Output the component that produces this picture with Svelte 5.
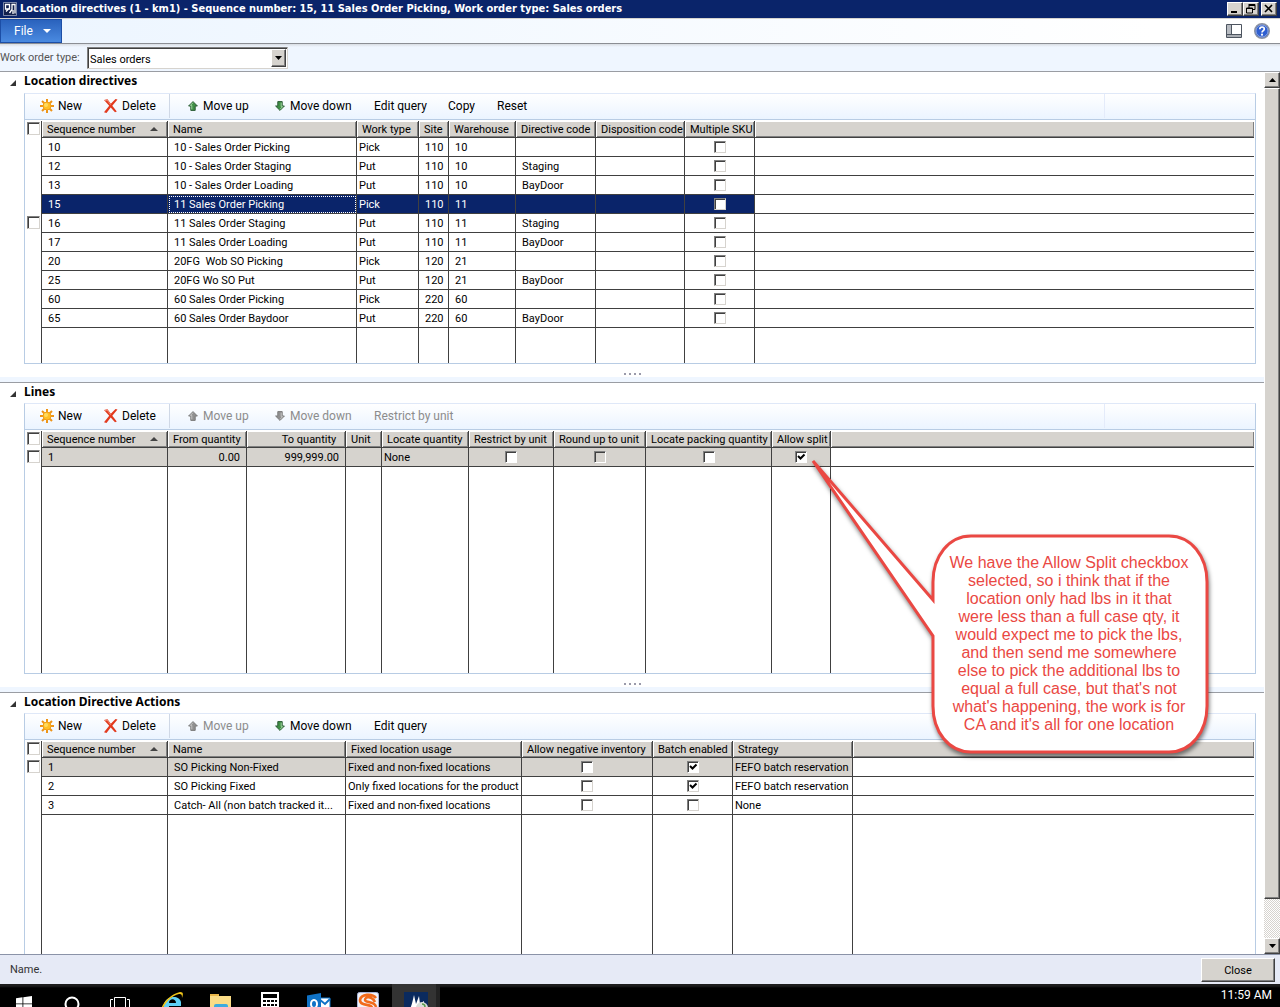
<script lang="ts">
    type Column = {
        title: string
        width: number
        align?: 'right' | 'center'
        indent?: boolean
        sorted?: boolean
    }

    type Action = {
        label: string
        width: number
        icon?: 'new' | 'delete' | 'up' | 'down'
        disabled?: boolean
        divider?: boolean
    }

    type Row = {
        cells: (string | boolean)[]
        state?: 'selected' | 'current'
        marker?: boolean
    }

    type Section = {
        title: string
        extraDivider?: boolean
        actions: Action[]
        columns: Column[]
        rows: Row[]
    }

    const sections: Section[] = [
        {
            title: 'Location directives',
            extraDivider: true,
            actions: [
                { label: 'New', width: 64, icon: 'new' },
                { label: 'Delete', width: 65, icon: 'delete' },
                { label: 'Move up', width: 87, icon: 'up', divider: true },
                { label: 'Move down', width: 99, icon: 'down' },
                { label: 'Edit query', width: 74 },
                { label: 'Copy', width: 49 },
                { label: 'Reset', width: 49 },
            ],
            columns: [
                { title: 'Sequence number', width: 126, sorted: true, indent: true },
                { title: 'Name', width: 189, indent: true },
                { title: 'Work type', width: 62 },
                { title: 'Site', width: 30, indent: true },
                { title: 'Warehouse', width: 67, indent: true },
                { title: 'Directive code', width: 80, indent: true },
                { title: 'Disposition code', width: 89, indent: true },
                { title: 'Multiple SKU', width: 70, align: 'center' },
            ],
            rows: [
                { cells: ['10', '10 - Sales Order Picking', 'Pick', '110', '10', '', '', false] },
                { cells: ['12', '10 - Sales Order Staging', 'Put', '110', '10', 'Staging', '', false] },
                { cells: ['13', '10 - Sales Order Loading', 'Put', '110', '10', 'BayDoor', '', false] },
                { cells: ['15', '11 Sales Order Picking', 'Pick', '110', '11', '', '', false], state: 'selected' },
                { cells: ['16', '11 Sales Order Staging', 'Put', '110', '11', 'Staging', '', false], marker: true },
                { cells: ['17', '11 Sales Order Loading', 'Put', '110', '11', 'BayDoor', '', false] },
                { cells: ['20', '20FG  Wob SO Picking', 'Pick', '120', '21', '', '', false] },
                { cells: ['25', '20FG Wo SO Put', 'Put', '120', '21', 'BayDoor', '', false] },
                { cells: ['60', '60 Sales Order Picking', 'Pick', '220', '60', '', '', false] },
                { cells: ['65', '60 Sales Order Baydoor', 'Put', '220', '60', 'BayDoor', '', false] },
            ],
        },
        {
            title: 'Lines',
            extraDivider: true,
            actions: [
                { label: 'New', width: 64, icon: 'new' },
                { label: 'Delete', width: 65, icon: 'delete' },
                { label: 'Move up', width: 87, icon: 'up', divider: true, disabled: true },
                { label: 'Move down', width: 99, icon: 'down', disabled: true },
                { label: 'Restrict by unit', width: 99, disabled: true },
            ],
            columns: [
                { title: 'Sequence number', width: 126, sorted: true, indent: true },
                { title: 'From quantity', width: 79, align: 'right' },
                { title: 'To quantity', width: 99, align: 'right' },
                { title: 'Unit', width: 36 },
                { title: 'Locate quantity', width: 87 },
                { title: 'Restrict by unit', width: 85, align: 'center' },
                { title: 'Round up to unit', width: 92, align: 'center' },
                { title: 'Locate packing quantity', width: 126, align: 'center' },
                { title: 'Allow split', width: 59, align: 'center' },
            ],
            rows: [
                { cells: ['1', '0.00', '999,999.00', '', 'None', false, false, false, true], state: 'current', marker: true },
            ],
        },
        {
            title: 'Location Directive Actions',
            actions: [
                { label: 'New', width: 64, icon: 'new' },
                { label: 'Delete', width: 65, icon: 'delete' },
                { label: 'Move up', width: 87, icon: 'up', divider: true, disabled: true },
                { label: 'Move down', width: 99, icon: 'down' },
                { label: 'Edit query', width: 74 },
            ],
            columns: [
                { title: 'Sequence number', width: 126, sorted: true, indent: true },
                { title: 'Name', width: 178, indent: true },
                { title: 'Fixed location usage', width: 176 },
                { title: 'Allow negative inventory', width: 131, align: 'center' },
                { title: 'Batch enabled', width: 80, align: 'center' },
                { title: 'Strategy', width: 120 },
            ],
            rows: [
                { cells: ['1', 'SO Picking Non-Fixed', 'Fixed and non-fixed locations', false, true, 'FEFO batch reservation'], state: 'current', marker: true },
                { cells: ['2', 'SO Picking Fixed', 'Only fixed locations for the product', false, true, 'FEFO batch reservation'] },
                { cells: ['3', 'Catch- All (non batch tracked it...', 'Fixed and non-fixed locations', false, false, 'None'] },
            ],
        },
    ]
</script>

{#snippet icon(name: string)}
    {#if name === 'new'}
        <svg class="icon" width="14" height="14" viewBox="0 0 14 14" aria-hidden="true">
            <g stroke="#ee9417" stroke-width="2">
                <path d="M7 0v14M0 7h14M2 2l10 10M12 2L2 12" />
            </g>
            <circle cx="7" cy="7" r="4" fill="#ffbf26" stroke="#f0a01c" />
            <circle cx="6" cy="6" r="2" fill="#ffdb60" />
        </svg>
    {:else if name === 'delete'}
        <svg class="icon" width="14" height="14" viewBox="0 0 14 14" aria-hidden="true">
            <path d="M0 1l3.500-.8 3.300 4.600L11.500 0l2 .6L8.300 6.800l4.500 5.700-1.800.8L6.700 8.500 2.500 14 0 13.200l5.200-6.400z" fill="#e23a1e" />
            <path d="M1 1.500l2.200-.4 3.400 4.700" fill="none" stroke="#f28a72" />
        </svg>
    {:else}
        <svg class="icon arrow" class:flip={name === 'down'} width="10" height="10" viewBox="0 0 10 10" aria-hidden="true">
            <path class="shape" d="M5 .6L9.4 5H7.2v4.4H2.8V5H.6z" />
            <path class="shine" d="M5 1.6L2.4 4.4h1.4v4" />
        </svg>
    {/if}
{/snippet}

<div class="window">
    <header class="titlebar">
        <svg width="14" height="14" viewBox="0 0 14 14" aria-hidden="true">
            <path d="M.5.500h13v13H.5z" fill="#12204c" stroke="#c8cede" stroke-width=".6" />
            <path d="M2 2.500h5M2.500 2v5h4V2M6.500 6L3 9.500M8.500 2.500h3.500v9M9 2v5.500L6.500 11M10 8v4" fill="none" stroke="#fff" stroke-width="1.300" />
        </svg>
        <h1>Location directives (1 - km1) - Sequence number: 15, 11 Sales Order Picking, Work order type: Sales orders</h1>
        <div class="winbuttons">
            <button class="raised" aria-label="Minimize">
                <svg width="12" height="10" viewBox="0 0 12 10"><path d="M2 7h6v2H2z" /></svg>
            </button>
            <button class="raised" aria-label="Restore">
                <svg width="12" height="10" viewBox="0 0 12 10"><path d="M4 .5h6v5H8M4 1.500h6M4 0v4M1.500 4h6v5h-6zM1 4.500h7" fill="none" stroke="#000" /></svg>
            </button>
            <button class="raised close" aria-label="Close window">
                <svg width="12" height="10" viewBox="0 0 12 10"><path d="M2 1l7 7M9 1L2 8" stroke="#000" stroke-width="1.600" /></svg>
            </button>
        </div>
    </header>

    <nav class="ribbon">
        <button class="file">File
            <svg width="8" height="4" viewBox="0 0 8 4" aria-hidden="true"><path d="M0 0h8L4 4z" fill="#fff" /></svg>
        </button>
        <div class="ribbonicons">
            <button class="plain" aria-label="View layout">
                <svg width="16" height="14" viewBox="0 0 16 14">
                    <path d="M.5.500h15v13H.5z" fill="#fff" stroke="#4d5560" />
                    <path d="M1 1h4v9H1z" fill="#b8bcc2" />
                    <path d="M1 11h14v2H1z" fill="#a9adb3" />
                    <path d="M5.500 1v9.500M1 10.500h14" stroke="#4d5560" fill="none" />
                </svg>
            </button>
            <button class="plain" aria-label="Help">
                <svg width="16" height="16" viewBox="0 0 16 16">
                    <circle cx="8" cy="8" r="7.300" fill="#2f5fd0" stroke="#8d93a0" stroke-width="1.400" />
                    <circle cx="8" cy="8" r="6" fill="none" stroke="#c7d2ea" stroke-width=".6" />
                    <path d="M5.800 6.300c0-3 4.500-3 4.500-.3C10.300 7.600 8 7.600 8 9.600" fill="none" stroke="#fff" stroke-width="1.700" />
                    <circle cx="8" cy="11.700" r="1.100" fill="#fff" />
                </svg>
            </button>
        </div>
    </nav>

    <div class="filter">
        <label for="ordertype">Work order type:</label>
        <div class="combo">
            <select id="ordertype">
                <option>Sales orders</option>
            </select>
            <span class="raised dropmark">
                <svg width="7" height="4" viewBox="0 0 7 4" aria-hidden="true"><path d="M0 0h7L3.500 4z" /></svg>
            </span>
        </div>
    </div>

    <div class="content">
        <main>
            {#each sections as section, s}
                <section>
                    <h2>
                        <svg width="6" height="6" viewBox="0 0 6 6" aria-hidden="true"><path d="M6 0v6H0z" fill="#333" /></svg>
                        {section.title}
                    </h2>
                    <div class="panel">
                        <div class="toolbar" class:divided={section.extraDivider}>
                            {#each section.actions as action}
                                {#if action.divider}<span class="divider"></span>{/if}
                                <button disabled={action.disabled} style:width="{action.width}px">
                                    {#if action.icon}{@render icon(action.icon)}{/if}
                                    {action.label}
                                </button>
                            {/each}
                        </div>
                        <div class="gridbox">
                            <table>
                                <colgroup>
                                    <col class="marker" />
                                    {#each section.columns as column}
                                        <col style:width="{column.width}px" />
                                    {/each}
                                    <col />
                                </colgroup>
                                <thead>
                                    <tr>
                                        <td class="marker"><input type="checkbox" aria-label="Select all" /></td>
                                        {#each section.columns as column}
                                            <th class={column.align}>
                                                {column.title}
                                                {#if column.sorted}
                                                    <svg class="sort" width="8" height="4" viewBox="0 0 8 4" aria-hidden="true"><path d="M4 0l4 4H0z" fill="#444" /></svg>
                                                {/if}
                                            </th>
                                        {/each}
                                        <th class="rest"></th>
                                    </tr>
                                </thead>
                                <tbody>
                                    {#each section.rows as row}
                                        <tr class={row.state}>
                                            <td class="marker">
                                                {#if row.marker}<input type="checkbox" aria-label="Select row {row.cells[0]}" />{/if}
                                            </td>
                                            {#each row.cells as cell, c}
                                                {@const column = section.columns[c]}
                                                <td class={column.align} class:indent={column.indent} class:focus={row.state === 'selected' && c === 1}>
                                                    {#if typeof cell === 'boolean'}
                                                        <input type="checkbox" checked={cell} class:grayed={column.title === 'Round up to unit'} aria-label={column.title} />
                                                    {:else}
                                                        {cell}
                                                    {/if}
                                                </td>
                                            {/each}
                                            <td class="rest"></td>
                                        </tr>
                                    {/each}
                                    <tr class="filler">
                                        <td class="marker"></td>
                                        {#each section.columns as _}
                                            <td></td>
                                        {/each}
                                        <td class="rest"></td>
                                    </tr>
                                </tbody>
                            </table>
                        </div>
                    </div>
                    {#if s < sections.length - 1}
                        <div class="splitter"><i></i><i></i><i></i><i></i></div>
                    {/if}
                </section>
            {/each}
        </main>

        <div class="scrollbar">
            <button class="raised" aria-label="Scroll up">
                <svg width="7" height="4" viewBox="0 0 7 4"><path d="M3.500 0L7 4H0z" /></svg>
            </button>
            <div class="raised thumb"></div>
            <div class="track"></div>
            <button class="raised" aria-label="Scroll down">
                <svg width="7" height="4" viewBox="0 0 7 4"><path d="M0 0h7L3.500 4z" /></svg>
            </button>
        </div>

        <aside class="callout">
            <svg width="410" height="314" viewBox="0 0 410 314" aria-hidden="true">
                <path d="M8 11L128 150V132C128 106 144 86 166 86H364C386 86 402 106 402 132V256C402 282 386 302 364 302H166C144 302 128 282 128 256V186z" />
            </svg>
            <p>
                We have the Allow Split checkbox<br />
                selected, so i think that if the<br />
                location only had lbs in it that<br />
                were less than a full case qty, it<br />
                would expect me to pick the lbs,<br />
                and then send me somewhere<br />
                else to pick the additional lbs to<br />
                equal a full case, but that's not<br />
                what's happening, the work is for<br />
                CA and it's all for one location
            </p>
        </aside>
    </div>

    <footer class="status">
        <span>Name.</span>
        <button class="raised">Close</button>
    </footer>
</div>

<div class="taskbar">
    <button class="system" aria-label="Start">
        <svg width="16" height="16" viewBox="0 0 16 16"><path d="M0 2.200L6.500 1.300V7.500H0zM7.300 1.200L16 0v7.500H7.300zM0 8.300h6.500v6.300L0 13.700zM7.300 8.300H16V16l-8.700-1.200z" fill="#fff" /></svg>
    </button>
    <button class="system" aria-label="Search">
        <svg width="16" height="16" viewBox="0 0 16 16"><circle cx="8" cy="8" r="6.500" fill="none" stroke="#fff" stroke-width="2" /></svg>
    </button>
    <button class="system" aria-label="Task view">
        <svg width="20" height="16" viewBox="0 0 20 16"><path d="M4.500 1.500h11v13h-11zM3 3.500H.5v10H3M17 3.500h2.500v10H17" fill="none" stroke="#fff" /></svg>
    </button>
    <div class="pinned">
        <button aria-label="Internet Explorer">
            <svg width="24" height="24" viewBox="0 0 24 24">
                <path d="M20 14H9c0 5 7 6 10 2v4C10 25 3 20 4 12 6 4 19 2 21 10v4zM9 11h7c0-5-7-5-7 0z" fill="#5fd0f5" />
                <path d="M1 22C-1 15 8 3 20 0c4 0 3 3 2 6 0-3 0-4-3-4C11 4 4 12 3 17z" fill="#f0c419" />
            </svg>
        </button>
        <button aria-label="File Explorer">
            <svg width="22" height="20" viewBox="0 0 22 20">
                <path d="M0 0h9v2h12v18H0z" fill="#fbdc86" />
                <path d="M0 0h9v2H0z" fill="#e9b649" />
                <path d="M4 12q0-2 2-2h10q2 0 2 2v8H4z" fill="#3cabdf" />
            </svg>
        </button>
        <button aria-label="Calculator">
            <svg width="18" height="24" viewBox="0 0 18 24">
                <path d="M0 0h18v24H0z" fill="#fff" />
                <path d="M2 2h14v4H2zM2 8h3v2H2zm4 0h3v2H6zm4 0h3v2h-3zm4 0h2v2h-2zM2 12h3v2H2zm4 0h3v2H6zm4 0h3v2h-3zm4 0h2v2h-2z" fill="#000" />
            </svg>
        </button>
        <button aria-label="Outlook">
            <svg width="24" height="24" viewBox="0 0 24 24">
                <path d="M12 6h11v14H12z" fill="#fff" stroke="#0f72c6" />
                <path d="M12 7l6 5 5-5" fill="none" stroke="#0f72c6" stroke-width="2" />
                <path d="M0 3.500L14 1v22L0 20.500z" fill="#0f72c6" />
                <ellipse cx="7" cy="12" rx="3" ry="4" fill="none" stroke="#fff" stroke-width="2" />
            </svg>
        </button>
        <button aria-label="Snagit">
            <svg width="22" height="24" viewBox="0 0 22 24">
                <rect x=".5" y=".5" width="21" height="23" rx="2" fill="#f3f3f8" stroke="#a8b5dc" />
                <path d="M19 6C15 1 4 2 3 8c0 7 12 3 12 8 0 3-6 4-11 1M18 10C15 4 8 4 8 8c0 3 10 1 11 7" fill="none" stroke="#f26a1b" stroke-width="2.600" />
            </svg>
        </button>
        <button class="active" aria-label="Dynamics AX">
            <svg width="24" height="24" viewBox="0 0 24 24">
                <path d="M0 0h24v24H0z" fill="#0a2a5e" />
                <path d="M4 20c3-4 4-8 6-17l2 9 3-8 1 8 4-3v11z" fill="#fff" />
                <circle cx="18" cy="16" r="6" fill="#d8dcd8" />
                <path d="M18 12q3 0 3 3" fill="none" stroke="#5a9a4a" stroke-width="1.500" />
            </svg>
        </button>
    </div>
    <time>11:59 AM</time>
</div>

<style>
    :global(body) {
        margin: 0;
        height: 100vh;
        overflow: hidden;
    }

    :global(#app) {
        height: 100vh;
        display: flex;
        flex-direction: column;
        font-family: Roboto, "Noto Sans", sans-serif;
        font-size: 11px;
        color: #000;
    }

    button {
        font: inherit;
        color: inherit;
        padding: 0;
        border: 0;
        background: none;
    }

    svg {
        flex: none;
    }

    .window {
        flex: 1;
        min-height: 0;
        display: flex;
        flex-direction: column;
        background: #fff;
    }

    .raised {
        box-sizing: border-box;
        display: flex;
        align-items: center;
        justify-content: center;
        background: #d6d3ce;
        border: 1px solid;
        border-color: #fff #404040 #404040 #fff;
        box-shadow: inset -1px -1px #808080;
    }

    .titlebar {
        height: 18px;
        display: flex;
        align-items: center;
        gap: 3px;
        padding: 0 3px;
        background: #0a246a;
        color: #fff;
    }

    h1 {
        flex: 1;
        margin: 0;
        font-family: "DejaVu Sans Condensed", "Noto Sans", sans-serif;
        font-size: 11px;
        font-weight: 700;
        line-height: 18px;
        white-space: nowrap;
    }

    .winbuttons {
        display: flex;
    }

    .winbuttons button {
        width: 16px;
        height: 14px;
    }

    .winbuttons .close {
        margin-left: 2px;
    }

    .ribbon {
        height: 24px;
        display: flex;
        justify-content: space-between;
        border-top: 1px solid #d6d3ce;
        border-bottom: 1px solid #8b8e94;
        background: linear-gradient(to right, #ecf5ff, #fff 90%);
    }

    .file {
        width: 62px;
        height: 24px;
        display: flex;
        align-items: center;
        gap: 10px;
        padding-left: 13px;
        border: 1px solid #1c4ea6;
        background: linear-gradient(#2a62bd, #4a8ae0);
        box-sizing: border-box;
        font-size: 12px;
        color: #fff;
    }

    .ribbonicons {
        display: flex;
        align-items: center;
        gap: 12px;
        padding-right: 10px;
    }

    .plain {
        display: flex;
    }

    .filter {
        height: 27px;
        display: flex;
        align-items: center;
        gap: 5px;
        border-bottom: 1px solid #9a9da3;
        background: linear-gradient(#d9dde3, #eff6ff 3px);
    }

    label {
        width: 82px;
        font-size: 11px;
        color: #555;
        white-space: nowrap;
    }

    .combo {
        position: relative;
        width: 201px;
        height: 22px;
        margin-top: 1px;
    }

    select {
        appearance: none;
        width: 100%;
        height: 100%;
        padding: 2px 2px 0;
        border: 1px solid;
        border-color: #808080 #d6d3ce #d6d3ce #808080;
        border-radius: 0;
        box-shadow: inset 1px 1px #404040;
        background: #fff;
        font: inherit;
        color: inherit;
    }

    .dropmark {
        position: absolute;
        top: 2px;
        right: 2px;
        width: 15px;
        height: 18px;
        pointer-events: none;
    }

    .content {
        position: relative;
        flex: 1;
        min-height: 0;
        display: flex;
    }

    main {
        flex: 1;
        min-width: 0;
        display: grid;
        grid-template-rows: 311fr 310fr 261fr;
    }

    section {
        min-height: 0;
        display: flex;
        flex-direction: column;
    }

    h2 {
        display: flex;
        align-items: center;
        gap: 8px;
        margin: 0;
        padding: 0 0 2px 10px;
        font-family: "Noto Sans", sans-serif;
        font-size: 12px;
        font-weight: 700;
        line-height: 18px;
    }

    section:first-child h2 {
        padding-bottom: 3px;
    }

    h2 svg {
        margin-top: 4px;
    }

    .panel {
        flex: 1;
        min-height: 0;
        display: flex;
        flex-direction: column;
        margin: 0 8px 0 24px;
        border: 1px solid #b8cce4;
        border-top-color: #dfe8f8;
    }

    section:last-child .panel {
        border-bottom: 0;
    }

    .toolbar {
        box-sizing: border-box;
        height: 26px;
        display: flex;
        align-items: center;
        padding: 0 0 1px 15px;
        border-bottom: 1px solid #b8cce4;
        background: linear-gradient(#fff, #ebf4ff);
        font-size: 12px;
    }

    .toolbar.divided::after {
        content: "";
        width: 1px;
        height: 24px;
        margin: 0 150px 0 auto;
        background: #e4ebfa;
    }

    .toolbar button {
        display: flex;
        align-items: center;
        gap: 4px;
        white-space: nowrap;
    }

    .toolbar button:disabled {
        color: #8c8c8c;
    }

    .divider {
        width: 1px;
        height: 24px;
        margin-right: 18px;
        background: #cfd8e6;
    }

    .arrow {
        margin-right: 1px;
    }

    .arrow .shape {
        fill: #3f8f45;
        stroke: #2c5c36;
    }

    .arrow .shine {
        fill: none;
        stroke: #9fd3a0;
    }

    .flip {
        rotate: 180deg;
    }

    button:disabled .shape {
        fill: #909090;
        stroke: #7c7c7c;
    }

    button:disabled .shine {
        stroke: #c4c4c4;
    }

    .gridbox {
        flex: 1;
        min-height: 0;
        padding: 1px 1px 0 0;
        overflow: hidden;
    }

    table {
        width: 100%;
        height: 100%;
        table-layout: fixed;
        border-collapse: separate;
        border-spacing: 0;
    }

    col.marker {
        width: 17px;
    }

    th, td {
        box-sizing: border-box;
        height: 19px;
        padding: 2px 0 0 2px;
        border-right: 1px solid #404040;
        border-bottom: 1px solid #404040;
        font-weight: 400;
        line-height: 16px;
        text-align: left;
        white-space: pre;
        overflow: hidden;
    }

    th {
        position: relative;
        height: 17px;
        padding-left: 5px;
        line-height: 14px;
        background: #d6d3ce;
        box-shadow: inset 1px 1px #fff, inset -1px -1px #808080;
    }

    td.indent {
        padding-left: 6px;
    }

    .right {
        padding-right: 6px;
        text-align: right;
    }

    td.center {
        padding: 0;
        line-height: 18px;
        text-align: center;
    }

    .sort {
        position: absolute;
        top: 6px;
        right: 9px;
    }

    td.marker {
        border-bottom: 0;
        vertical-align: top;
    }

    thead td.marker {
        height: 17px;
        padding-top: 1px;
    }

    .rest {
        border-right: 0;
    }

    .selected td:not(.marker, .rest) {
        background: #0a246a;
        color: #fff;
    }

    .current td:not(.marker, .rest) {
        background: #d6d3ce;
    }

    td.focus {
        outline: 1px dotted #fff;
        outline-offset: -2px;
    }

    .filler td {
        height: auto;
        border-bottom: 0;
    }

    input {
        appearance: none;
        box-sizing: border-box;
        display: inline-block;
        width: 12px;
        height: 12px;
        margin: 0;
        border: 1px solid;
        border-color: #808080 #d6d3ce #d6d3ce #808080;
        box-shadow: inset 1px 1px #404040;
        background: #fff;
        vertical-align: middle;
    }

    .marker input {
        display: block;
        width: 13px;
        height: 13px;
    }

    input.grayed {
        background: #d6d3ce;
    }

    input:checked {
        background: #fff url("data:image/svg+xml,%3Csvg xmlns='http://www.w3.org/2000/svg' viewBox='0 0 10 10'%3E%3Cpath d='M2 4l2.500 2.500L8.500 2.500' fill='none' stroke='black' stroke-width='2'/%3E%3C/svg%3E") center / 10px no-repeat;
    }

    .current td:not(.marker) input {
        border-color: #808080 #fff #fff #808080;
    }

    .splitter {
        box-sizing: border-box;
        height: 19px;
        display: flex;
        align-items: center;
        justify-content: center;
        gap: 3px;
        padding-top: 2px;
        border-bottom: 1px solid #9a9da3;
        background: linear-gradient(#fff 13px, #eff6ff 13px);
    }

    .splitter i {
        width: 2px;
        height: 2px;
        background: #9a9aaa;
    }

    .scrollbar {
        width: 16px;
        display: flex;
        flex-direction: column;
    }

    .scrollbar button {
        height: 16px;
        flex: none;
    }

    .thumb {
        flex: 811;
    }

    .track {
        flex: 39;
        background: repeating-conic-gradient(#d6d3ce 0 25%, #fff 0 50%) 0 0 / 2px 2px;
    }

    .callout {
        position: absolute;
        top: 378px;
        left: 805px;
    }

    .callout path {
        fill: #fff;
        stroke: #ea4843;
        stroke-width: 3;
        filter: drop-shadow(1px 3px 2px #00000080);
    }

    .callout p {
        position: absolute;
        top: 104px;
        left: 134px;
        width: 260px;
        margin: 0;
        font-family: "Liberation Sans", Arial, sans-serif;
        font-size: 16px;
        line-height: 18px;
        text-align: center;
        color: #ea4843;
    }

    .status {
        height: 29px;
        display: flex;
        align-items: center;
        justify-content: space-between;
        padding: 0 5px 0 10px;
        border-top: 1px solid #8b93a8;
        background: #e6eaf6;
        color: #333;
    }

    .status button {
        width: 74px;
        height: 24px;
        padding-top: 1px;
        color: #000;
    }

    .taskbar {
        flex: none;
        height: 23px;
        display: flex;
        align-items: flex-start;
        background: linear-gradient(#1c1c1c 2px, #000 4px);
        overflow: hidden;
    }

    .taskbar button {
        width: 49px;
        height: 40px;
        display: flex;
        align-items: center;
        justify-content: center;
        flex: none;
    }

    .taskbar .system {
        width: 48px;
    }

    .pinned {
        display: flex;
        margin-left: 3px;
    }

    .taskbar .active {
        width: 48px;
        background: linear-gradient(to right, #333 44px, #222 44px);
    }

    time {
        margin-left: auto;
        padding-right: 8px;
        font-size: 12px;
        line-height: 23px;
        color: #fff;
    }
</style>
